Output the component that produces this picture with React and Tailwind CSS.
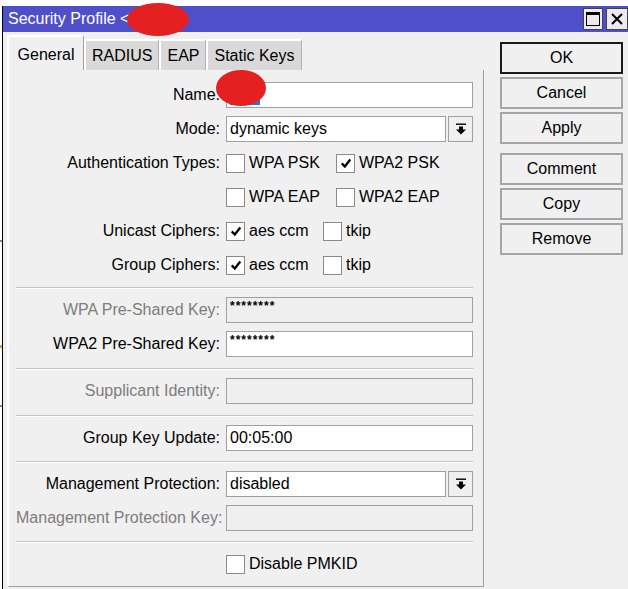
import React from "react";

const Check = () => (
  <svg viewBox="0 0 18 18" className="h-[14px] w-[14px]">
    <path d="M3.5 9.5 L7.5 13.5 L14.5 4.5" fill="none" stroke="#000" strokeWidth="3" />
  </svg>
);

const Box = ({ checked }) => (
  <div className="flex h-[19px] w-[19px] shrink-0 items-center justify-center border border-[#8a8a8a] bg-white">
    {checked && <Check />}
  </div>
);

const CheckItem = ({ checked, label, width }) => (
  <div className={`flex items-center ${width}`}>
    <Box checked={checked} />
    <span className="ml-[4px]">{label}</span>
  </div>
);

const Field = ({ label, disabled, children }) => (
  <div className="flex h-[34px] items-center">
    <div className={`w-[204px] shrink-0 whitespace-nowrap text-right ${disabled ? "text-[#7d7d7d]" : "text-black"}`}>
      {label}
    </div>
    <div className="ml-[6px] flex w-[247px] items-center">{children}</div>
  </div>
);

const Input = ({ value, disabled, small }) => (
  <div
    className={`flex h-[26px] w-full items-center border border-[#a0a0a0] px-[3px] ${disabled ? "bg-[#efefef]" : "bg-white"}`}
  >
    {small ? <span className="-mt-[8px] text-[12px] font-bold tracking-[1px]">{value}</span> : value}
  </div>
);

const Select = ({ value }) => (
  <div className="flex w-full gap-[2px]">
    <div className="flex h-[26px] flex-1 items-center border border-[#a0a0a0] bg-white px-[3px]">{value}</div>
    <div className="flex h-[26px] w-[25px] items-center justify-center border border-[#a0a0a0] bg-[#f0f0f0]">
      <svg viewBox="0 0 12 12" className="h-[12px] w-[12px]">
        <rect x="1" y="0.5" width="10" height="1.4" fill="#000" />
        <path d="M4 3.5 H8 V6.5 H11 L6 11.5 L1 6.5 H4 Z" fill="#000" />
      </svg>
    </div>
  </div>
);

const Sep = ({ mt = "mt-[7px]" }) => (
  <div className={`${mt} mb-[4px] mr-[10px] border-t border-b border-t-[#c3c3c3] border-b-white`} />
);

const Btn = ({ label, primary, className = "" }) => (
  <div
    className={`flex h-[32px] w-[123px] items-center justify-center bg-[#f0f0f0] ${primary ? "border-2 border-[#1a1a1a]" : "border-2 border-[#a6a6a6]"} ${className}`}
  >
    {label}
  </div>
);

const tabs = ["RADIUS", "EAP", "Static Keys"];

export default function App() {
  return (
    <div className="relative h-[589px] w-[628px] overflow-hidden bg-white font-['Liberation_Sans',Arial,sans-serif] text-[16px] text-black">
      <div className="absolute left-0 top-[240px] h-[2px] w-[2px] bg-[#888]" />
      <div className="absolute left-0 top-[345px] h-[3px] w-[2px] bg-[#d9a440]" />
      <div className="absolute left-0 top-[405px] h-[2px] w-[2px] bg-[#888]" />
      <div className="ml-[2px] mt-[6px] flex h-[583px] flex-col border-l border-black bg-[#f0f0f0]">
        {/* title bar */}
        <div className="flex h-[26px] items-center justify-between bg-[#4f50c9] pl-[5px] text-white">
          <span className="text-[16px]">Security Profile &lt;</span>
          <div className="flex gap-[3px]">
            <div className="flex h-[22px] w-[20px] items-center justify-center border border-[#444] bg-[#eceaf0]">
              <div className="h-[14px] w-[14px] border border-black border-t-[3px]" />
            </div>
            <div className="flex h-[22px] w-[22px] items-center justify-center border border-[#444] bg-[#eceaf0]">
              <svg viewBox="0 0 12 12" className="h-[12px] w-[12px]">
                <path d="M1 1 L11 11 M11 1 L1 11" stroke="#000" strokeWidth="2" />
              </svg>
            </div>
          </div>
        </div>

        <div className="flex pt-[3px]">
          {/* left */}
          <div className="ml-[4px] flex w-[477px] flex-col">
            <div className="flex h-[35px] items-end">
              <div className="flex h-[35px] w-[77px] items-center justify-center border-l-2 border-t-2 border-r border-l-white border-t-white border-r-[#a0a0a0] bg-[#f0f0f0] pt-[2px]">
                General
              </div>
              {tabs.map((t) => (
                <div
                  key={t}
                  className="flex h-[31px] items-center border-l-2 border-t-2 border-r border-l-white border-t-white border-r-[#b0b0b0] bg-[#d9d9d9] px-[6px]"
                >
                  {t}
                </div>
              ))}
            </div>
            <div className="h-[517px] border-l-2 border-r border-b border-l-white border-r-[#a0a0a0] border-b-[#a0a0a0] pl-[7px] pt-[8px]">
              <Field label="Name:">
                <div className="flex h-[26px] w-full items-center border border-[#a0a0a0] bg-white px-[3px]">
                  <div className="mt-[12px] h-[7px] w-[30px] bg-[#2479d6]" />
                </div>
              </Field>
              <Field label="Mode:">
                <Select value="dynamic keys" />
              </Field>
              <Field label="Authentication Types:">
                <CheckItem label="WPA PSK" width="w-[110px]" />
                <CheckItem checked label="WPA2 PSK" />
              </Field>
              <Field label="">
                <CheckItem label="WPA EAP" width="w-[110px]" />
                <CheckItem label="WPA2 EAP" />
              </Field>
              <Field label="Unicast Ciphers:">
                <CheckItem checked label="aes ccm" width="w-[97px]" />
                <CheckItem label="tkip" />
              </Field>
              <Field label="Group Ciphers:">
                <CheckItem checked label="aes ccm" width="w-[97px]" />
                <CheckItem label="tkip" />
              </Field>
              <Sep mt="mt-[5px]" />
              <Field label="WPA Pre-Shared Key:" disabled>
                <Input value="********" disabled small />
              </Field>
              <Field label="WPA2 Pre-Shared Key:">
                <Input value="********" small />
              </Field>
              <Sep />
              <Field label="Supplicant Identity:" disabled>
                <Input value="" disabled />
              </Field>
              <Sep />
              <Field label="Group Key Update:">
                <Input value="00:05:00" />
              </Field>
              <Sep mt="mt-[6px]" />
              <Field label="Management Protection:">
                <Select value="disabled" />
              </Field>
              <Field label="Management Protection Key:" disabled>
                <Input value="" disabled />
              </Field>
              <Sep mt="mt-[6px]" />
              <Field label="">
                <CheckItem label="Disable PMKID" />
              </Field>
            </div>
          </div>

          {/* right buttons */}
          <div className="ml-[16px] mt-[7px] flex flex-col">
            <Btn label="OK" primary />
            <Btn label="Cancel" className="mt-[3px]" />
            <Btn label="Apply" className="mt-[3px]" />
            <Btn label="Comment" className="mt-[9px]" />
            <Btn label="Copy" className="mt-[3px]" />
            <Btn label="Remove" className="mt-[3px]" />
          </div>
        </div>
      </div>

      {/* redaction marks */}
      <div className="absolute left-[127px] top-[3px] h-[33px] w-[62px] rounded-[50%] bg-[#e52021]" />
      <div className="absolute left-[216px] top-[70px] h-[36px] w-[50px] rounded-[50%] bg-[#e52021]" />
    </div>
  );
}
